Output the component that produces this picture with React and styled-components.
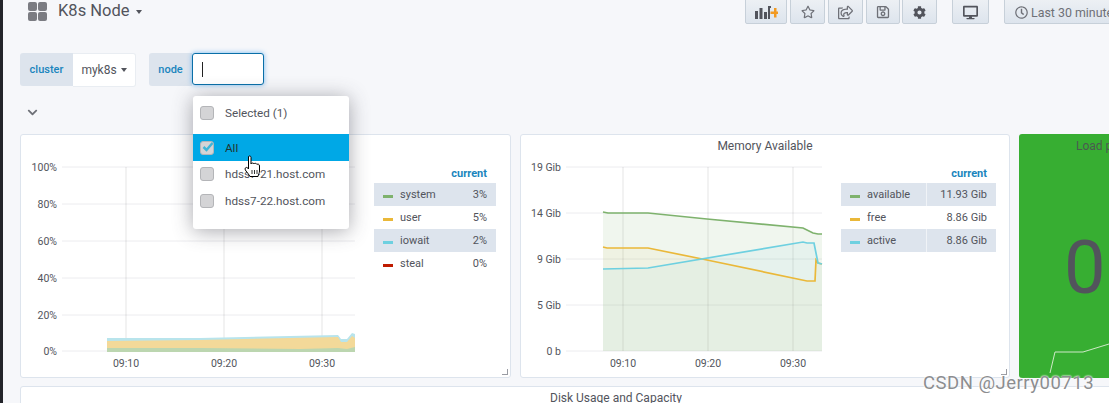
import React from 'react'
import styled, { createGlobalStyle } from 'styled-components'
import { FaRegStar, FaRegShareSquare, FaRegSave, FaCog, FaDesktop, FaRegClock, FaChevronDown } from 'react-icons/fa'

const Global = createGlobalStyle`
  html, body { margin: 0; padding: 0; background: #f7f8fa; }
  body { font-family: Roboto, "Liberation Sans", sans-serif; color: #52545c; }
`

const Page = styled.div`
  position: relative;
  width: 1109px;
  height: 403px;
  box-sizing: border-box;
  overflow: hidden;
  padding-left: 17px;
  border-left: 3px solid #23242a;
  background: #f6f7fa;
`

const Nav = styled.div`
  display: flex;
  align-items: flex-end;
  height: 24px;
`

const Title = styled.div`
  display: flex;
  align-items: center;
  gap: 11px;
  margin: 0 0 3px 8px;
  font-size: 16.5px;
  line-height: 20px;
  color: #52545c;
  flex: none;
  width: 717px;
`

const Caret = styled.span`
  display: inline-block;
  margin-left: ${p => p.$gap || 6}px;
  border-left: 3.5px solid transparent;
  border-right: 3.5px solid transparent;
  border-top: 4px solid #52545c;
  vertical-align: middle;
`

const GridTile = styled.div`
  display: grid;
  grid-template-columns: 9px 9px;
  grid-auto-rows: 9px;
  gap: 1px;
  span { background: #7b7c82; border-radius: 2px; }
`

const NavButton = styled.button`
  flex: none;
  box-sizing: border-box;
  width: ${p => p.$w}px;
  height: 32px;
  margin-left: ${p => p.$gap ?? 3}px;
  padding: 8px 0 0;
  display: flex;
  align-items: center;
  justify-content: ${p => (p.$left ? 'flex-start' : 'center')};
  gap: 3px;
  padding-left: ${p => (p.$left ? 10 : 0)}px;
  border: 1px solid #c7d0d9;
  border-radius: 2px;
  background: linear-gradient(180deg, #f1f3f6, #dde4ed);
  color: #6e7077;
  font: 12.4px Roboto, sans-serif;
  white-space: nowrap;
  svg { flex: none; }
`

const Vars = styled.div`
  display: flex;
  align-items: flex-start;
  margin-top: 29px;
  height: 34px;
`

const VarLabel = styled.div`
  box-sizing: border-box;
  width: ${p => p.$w}px;
  height: 33px;
  display: flex;
  align-items: center;
  justify-content: center;
  background: #dde4ed;
  border-radius: 3px 0 0 3px;
  color: #1a85bd;
  font-size: 11px;
  font-weight: 500;
  margin-left: ${p => p.$gap || 0}px;
`

const VarValue = styled.div`
  box-sizing: border-box;
  width: 63px;
  height: 34px;
  display: flex;
  align-items: center;
  justify-content: center;
  background: #fff;
  border: 1px solid #e9edf2;
  border-left: none;
  border-radius: 0 3px 3px 0;
  font-size: 12px;
`

const VarInput = styled.div`
  box-sizing: border-box;
  width: 72px;
  height: 32px;
  padding-left: 9px;
  display: flex;
  align-items: center;
  background: #fff;
  border: 1px solid #0a6fa8;
  border-radius: 3px;
  box-shadow: 0 0 5px rgba(82, 168, 236, 0.8);
  i { display: block; width: 1px; height: 15px; background: #222; }
`

const Collapse = styled.div`
  height: 47px;
  box-sizing: border-box;
  padding: 20px 0 0 7px;
  color: #6e7077;
  line-height: 12px;
`

const PanelRow = styled.div`
  display: grid;
  grid-template-columns: 491px 490px 90px;
  gap: 9px;
  height: 243px;
`

const Panel = styled.div`
  position: relative;
  box-sizing: border-box;
  background: #fff;
  border: 1px solid #dde4ed;
  border-radius: 3px;
  min-width: 0;
  &::after {
    content: '';
    position: absolute;
    right: 2px;
    bottom: 2px;
    width: 5px;
    height: 5px;
    border-right: 1px solid #9a9ca3;
    border-bottom: 1px solid #9a9ca3;
  }
`

const PanelTitle = styled.div`
  height: 22px;
  line-height: 22px;
  text-align: center;
  font-size: 12px;
  font-weight: 400;
  color: #52545c;
`

const PanelBody = styled.div`
  display: flex;
  align-items: flex-start;
`

const Chart = styled.svg`
  display: block;
  flex: none;
  text { font: 10.5px Roboto, sans-serif; fill: #52545c; }
`

const Legend = styled.div`
  flex: none;
  width: ${p => p.$w}px;
  margin: 8px 0 0 ${p => p.$gap}px;
  font-size: 11px;
`

const LegendHead = styled.div`
  height: 18px;
  line-height: 17px;
  text-align: right;
  padding-right: 9px;
  color: #1a85bd;
  font-weight: 700;
`

const LegendRow = styled.div`
  display: grid;
  grid-template-columns: ${p => p.$cols};
  height: 23px;
  line-height: 23px;
  background: ${p => (p.$odd ? '#dde4ed' : 'transparent')};
  color: #52545c;
`

const LegendName = styled.div`
  display: flex;
  align-items: center;
  padding-left: 9px;
  gap: 7px;
`

const LegendValue = styled.div`
  text-align: right;
  padding-right: 9px;
  ${p => p.$divider && 'border-left: 1px solid #f0f3f7;'}
`

const Marker = styled.i`
  display: block;
  width: 10px;
  height: 3px;
  margin-top: 3px;
  background: ${p => p.$color};
`

const GreenPanel = styled.div`
  position: relative;
  background: #37ae32;
  border-radius: 3px 0 0 3px;
  overflow: hidden;
`

const GreenTitle = styled.div`
  height: 24px;
  line-height: 24px;
  padding-left: 57px;
  font-size: 12px;
  white-space: nowrap;
  color: #4a5a50;
`

const BigValue = styled.div`
  margin-top: 70px;
  padding-left: 45px;
  font-size: 74px;
  line-height: 80px;
  color: #52545c;
`

const Sparkline = styled.svg`
  position: absolute;
  left: 0;
  bottom: 0;
`

const DiskPanel = styled(Panel)`
  margin-top: 9px;
  height: 40px;
  margin-right: -20px;
  &::after { display: none; }
`

const DiskTitle = styled(PanelTitle)`
  width: 1190px;
  height: 20px;
  line-height: 23px;
`

const Dropdown = styled.div`
  position: absolute;
  left: 190px;
  top: 96px;
  width: 156px;
  height: 133px;
  padding-top: 3px;
  box-sizing: border-box;
  background: #fff;
  border-radius: 3px;
  box-shadow: 0 2px 20px rgba(60, 60, 70, 0.45);
  font-size: 11.7px;
`

const Option = styled.div`
  display: flex;
  align-items: center;
  gap: 11px;
  height: ${p => p.$h || 27}px;
  padding-left: 7px;
  color: ${p => (p.$active ? '#23342f' : '#52545c')};
  background: ${p => (p.$active ? '#00a8e6' : 'transparent')};
  margin-bottom: ${p => p.$mb || 0}px;
`

const Check = styled.span`
  flex: none;
  position: relative;
  box-sizing: border-box;
  width: 14px;
  height: 14px;
  background: #d4d4d6;
  border: 1px solid #b4b5b8;
  border-radius: 3px;
`

const Tick = styled.svg`
  position: absolute;
  left: 0;
  top: -2px;
`

const Hand = styled.svg`
  position: absolute;
  left: 241px;
  top: 155px;
`

const Watermark = styled.div`
  position: absolute;
  left: 920px;
  top: 373px;
  font-size: 18.5px;
  line-height: 20px;
  letter-spacing: 0.5px;
  color: #8c8d90;
  text-shadow: 0 0 2px #fff, 0 0 2px #fff;
  white-space: nowrap;
`

const pts = a => a.map(p => p.join(',')).join(' ')

const cpuGrid = [167, 204, 241, 278, 315, 351]
const cpuLabels = ['100%', '80%', '60%', '40%', '20%', '0%']
const cpuTicks = [[126, '09:10'], [224, '09:20'], [322, '09:30']]

const CpuChart = () => (
  <Chart width="350" height="220" viewBox="21 157 350 220">
    {cpuGrid.map((y, i) => (
      <g key={y}>
        <line x1="62" x2="355" y1={y} y2={y} stroke="#ececef" />
        <text x="57" y={y + 4} textAnchor="end">{cpuLabels[i]}</text>
      </g>
    ))}
    {cpuTicks.map(([x, t]) => (
      <g key={t}>
        <line x1={x} x2={x} y1="167" y2="351" stroke="#000" strokeOpacity="0.05" strokeWidth="2" />
        <text x={x} y="367" textAnchor="middle">{t}</text>
      </g>
    ))}
    <polygon fill="#b8e4ec" points={pts([[107, 338], [200, 338], [338, 335], [341, 339], [347, 339], [352, 333], [355, 334], [355, 352], [107, 352]])} />
    <polygon fill="#f3d999" points={pts([[107, 341], [200, 340], [338, 337], [341, 342], [347, 342], [352, 336], [355, 338], [355, 352], [107, 352]])} />
    <polygon fill="#bcd6b0" points={pts([[107, 348], [200, 348], [300, 349], [338, 348], [347, 349], [355, 347], [355, 352], [107, 352]])} />
  </Chart>
)

const memGrid = [[167, '19 Gib'], [213, '14 Gib'], [259, '9 Gib'], [305, '5 Gib'], [351, '0 b']]
const memTicks = [[623, '09:10'], [708, '09:20'], [793, '09:30']]
const green = [[603, 212], [608, 213], [648, 213], [707, 219], [803, 228], [813, 233], [818, 234], [822, 234]]
const orange = [[603, 247], [607, 248], [648, 248], [707, 260], [807, 281], [815, 281], [816, 260], [818, 263], [822, 264]]
const blue = [[603, 269], [648, 268], [803, 242], [807, 243], [814, 243], [818, 263], [822, 264]]
const area = line => pts([...line, [822, 351], [603, 351]])

const MemChart = () => (
  <Chart width="320" height="220" viewBox="521 157 320 220">
    {memGrid.map(([y, l]) => (
      <g key={y}>
        <line x1="566" x2="822" y1={y} y2={y} stroke="#ececef" />
        <text x="561" y={y + 4} textAnchor="end">{l}</text>
      </g>
    ))}
    {memTicks.map(([x, t]) => (
      <g key={t}>
        <line x1={x} x2={x} y1="167" y2="351" stroke="#000" strokeOpacity="0.05" strokeWidth="2" />
        <text x={x} y="367" textAnchor="middle">{t}</text>
      </g>
    ))}
    <polygon points={area(green)} fill="#7eb26d" fillOpacity="0.116" />
    <polygon points={area(orange)} fill="#eab839" fillOpacity="0.06" />
    <polygon points={area(blue)} fill="#6ed0e0" fillOpacity="0.08" />
    <polyline points={pts(green)} fill="none" stroke="#7eb26d" strokeWidth="1.7" />
    <polyline points={pts(orange)} fill="none" stroke="#eab839" strokeWidth="1.7" />
    <polyline points={pts(blue)} fill="none" stroke="#6ed0e0" strokeWidth="1.7" />
  </Chart>
)

const cpuLegend = [['system', '3%', '#7eb26d'], ['user', '5%', '#eab839'], ['iowait', '2%', '#6ed0e0'], ['steal', '0%', '#bf1b00']]
const memLegend = [['available', '11.93 Gib', '#7eb26d'], ['free', '8.86 Gib', '#eab839'], ['active', '8.86 Gib', '#6ed0e0']]

const App = () => (
  <Page>
    <Global />
    <Nav>
      <Title>
        <GridTile><span /><span /><span /><span /></GridTile>
        <div>K8s Node<Caret $gap={7} /></div>
      </Title>
      <NavButton $w={42} $gap={0}>
        <svg width="23" height="14" viewBox="0 0 23 14">
          <path d="M0 6h3v8H0zM4.500 3h3v11h-3zM9 7h3v7H9zM13 1h3v2h-1v11h-2z" fill="#52545c" />
          <path d="M19 3h2.500v3.500H23V9h-1.500v3.500H19V9h-3.500V6.500H19z" fill="#f29a22" />
        </svg>
      </NavButton>
      <NavButton $w={35}><FaRegStar size={14} /></NavButton>
      <NavButton $w={35}><FaRegShareSquare size={15} /></NavButton>
      <NavButton $w={34}><FaRegSave size={14} /></NavButton>
      <NavButton $w={35} $gap={2}><FaCog size={13} color="#52545c" /></NavButton>
      <NavButton $w={37} $gap={15}><FaDesktop size={15} color="#52545c" /></NavButton>
      <NavButton $w={120} $gap={15} $left><FaRegClock size={13} />Last 30 minutes</NavButton>
    </Nav>
    <Vars>
      <VarLabel $w={53}>cluster</VarLabel>
      <VarValue>myk8s<Caret $gap={4} /></VarValue>
      <VarLabel $w={43} $gap={13}>node</VarLabel>
      <VarInput><i /></VarInput>
    </Vars>
    <Collapse><FaChevronDown size={11} /></Collapse>
    <PanelRow>
      <Panel>
        <PanelTitle />
        <PanelBody>
          <CpuChart />
          <Legend $w={122} $gap={3}>
            <LegendHead>current</LegendHead>
            {cpuLegend.map(([n, v, c], i) => (
              <LegendRow key={n} $odd={i % 2 === 0} $cols="1fr 50px">
                <LegendName><Marker $color={c} />{n}</LegendName>
                <LegendValue>{v}</LegendValue>
              </LegendRow>
            ))}
          </Legend>
        </PanelBody>
      </Panel>
      <Panel>
        <PanelTitle>Memory Available</PanelTitle>
        <PanelBody>
          <MemChart />
          <Legend $w={155} $gap={0}>
            <LegendHead>current</LegendHead>
            {memLegend.map(([n, v, c], i) => (
              <LegendRow key={n} $odd={i % 2 === 0} $cols="85px 70px">
                <LegendName><Marker $color={c} />{n}</LegendName>
                <LegendValue $divider={i % 2 === 0}>{v}</LegendValue>
              </LegendRow>
            ))}
          </Legend>
        </PanelBody>
      </Panel>
      <GreenPanel>
        <GreenTitle>Load per CPU</GreenTitle>
        <BigValue>0</BigValue>
        <Sparkline width="90" height="40" viewBox="1019 337 90 40">
          <polyline points="1050,372 1055,351 1083,351 1109,343" fill="none" stroke="#cfe8c8" strokeWidth="1" />
        </Sparkline>
      </GreenPanel>
    </PanelRow>
    <DiskPanel>
      <DiskTitle>Disk Usage and Capacity</DiskTitle>
    </DiskPanel>
    <Dropdown>
      <Option $mb={8}><Check />Selected (1)</Option>
      <Option $active>
        <Check>
          <Tick width="14" height="14" viewBox="0 0 14 14">
            <path d="M2.500 7l3 3 6-7" fill="none" stroke="#3fb6d8" strokeWidth="2.500" />
          </Tick>
        </Check>
        All
      </Option>
      <Option $h={26}>
        <Check />hdss7-21.host.com
      </Option>
      <Option $h={27}>
        <Check />hdss7-22.host.com
      </Option>
    </Dropdown>
    <Hand width="18" height="23" viewBox="0 0 18 23">
      <path d="M4.500 1.500c1-1 2.500-.5 2.500 1V9c0-1 2.500-1.500 3 0 .2-1 2.500-1 3 .5.500-.8 2.500-.5 2.500 1.500v5c0 2-1 3-1.500 5.500H6c-1-2-2.500-3.500-4-5.500C.8 14.500.8 13 2 12.500c1-.4 1.800.5 2.500 1.500z" fill="#fff" stroke="#000" strokeWidth="1" strokeLinejoin="round" />
      <path d="M8 15v4M10.500 15v4M13 15v4" stroke="#000" strokeWidth="0.8" />
    </Hand>
    <Watermark>CSDN @Jerry00713</Watermark>
  </Page>
)

export default App
